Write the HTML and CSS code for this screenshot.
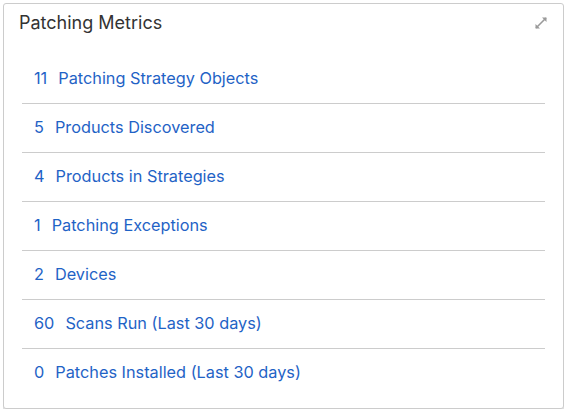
FILE: index.html
```html
<!DOCTYPE html>
<html>
<head>
<meta charset="utf-8">
<link rel="stylesheet" href="styles.css">
</head>
<body>
<div class="card">
  <div class="card-header">
    <span class="title">Patching Metrics</span>
    <svg class="expand" width="14" height="14" viewBox="0 0 14 14">
      <path d="M2 12 L12 2" stroke="#9a9a9a" stroke-width="1.6" fill="none"/>
      <path d="M8 1.5 L12.5 1.5 L12.5 6 Z" fill="#9a9a9a"/>
      <path d="M1.5 8 L1.5 12.5 L6 12.5 Z" fill="#9a9a9a"/>
    </svg>
  </div>
  <ul class="metrics">
    <li><span class="num">11</span><span class="label">Patching Strategy Objects</span></li>
    <li><span class="num">5</span><span class="label">Products Discovered</span></li>
    <li><span class="num">4</span><span class="label">Products in Strategies</span></li>
    <li><span class="num">1</span><span class="label">Patching Exceptions</span></li>
    <li><span class="num">2</span><span class="label">Devices</span></li>
    <li><span class="num">60</span><span class="label">Scans Run (Last 30 days)</span></li>
    <li><span class="num">0</span><span class="label">Patches Installed (Last 30 days)</span></li>
  </ul>
</div>
</body>
</html>
```
FILE: styles.css
```css
html, body { margin: 0; padding: 0; background: #fff; }
body { padding: 3px 3px 0 3px; font-family: "Inter", "Open Sans", sans-serif; }
.card {
  width: 561px;
  height: 406px;
  box-sizing: border-box;
  border: 1px solid #cccccc;
  border-radius: 3px;
  box-shadow: 0 2px 0 0 #e0e0e0;
  background: #fff;
  display: flex;
  flex-direction: column;
}
.card-header {
  display: flex;
  justify-content: space-between;
  align-items: flex-start;
  padding: 7px 15px 0 15px;
  height: 41px;
}
.title { font-size: 18px; color: #333; line-height: 24px; }
.expand { margin-top: 5px; }
.metrics {
  list-style: none;
  margin: 3px 0 0 0;
  padding: 0 18px;
}
.metrics li {
  display: flex;
  align-items: center;
  height: 46px;
  padding: 0 0 2px 12px;
  box-sizing: content-box;
  border-bottom: 1px solid #cccccc;
  font-size: 16.3px;
  color: #1f63c6;
  line-height: 20px;
}
.metrics li:last-child { border-bottom: none; }
.num { margin-right: 11px; }
```
